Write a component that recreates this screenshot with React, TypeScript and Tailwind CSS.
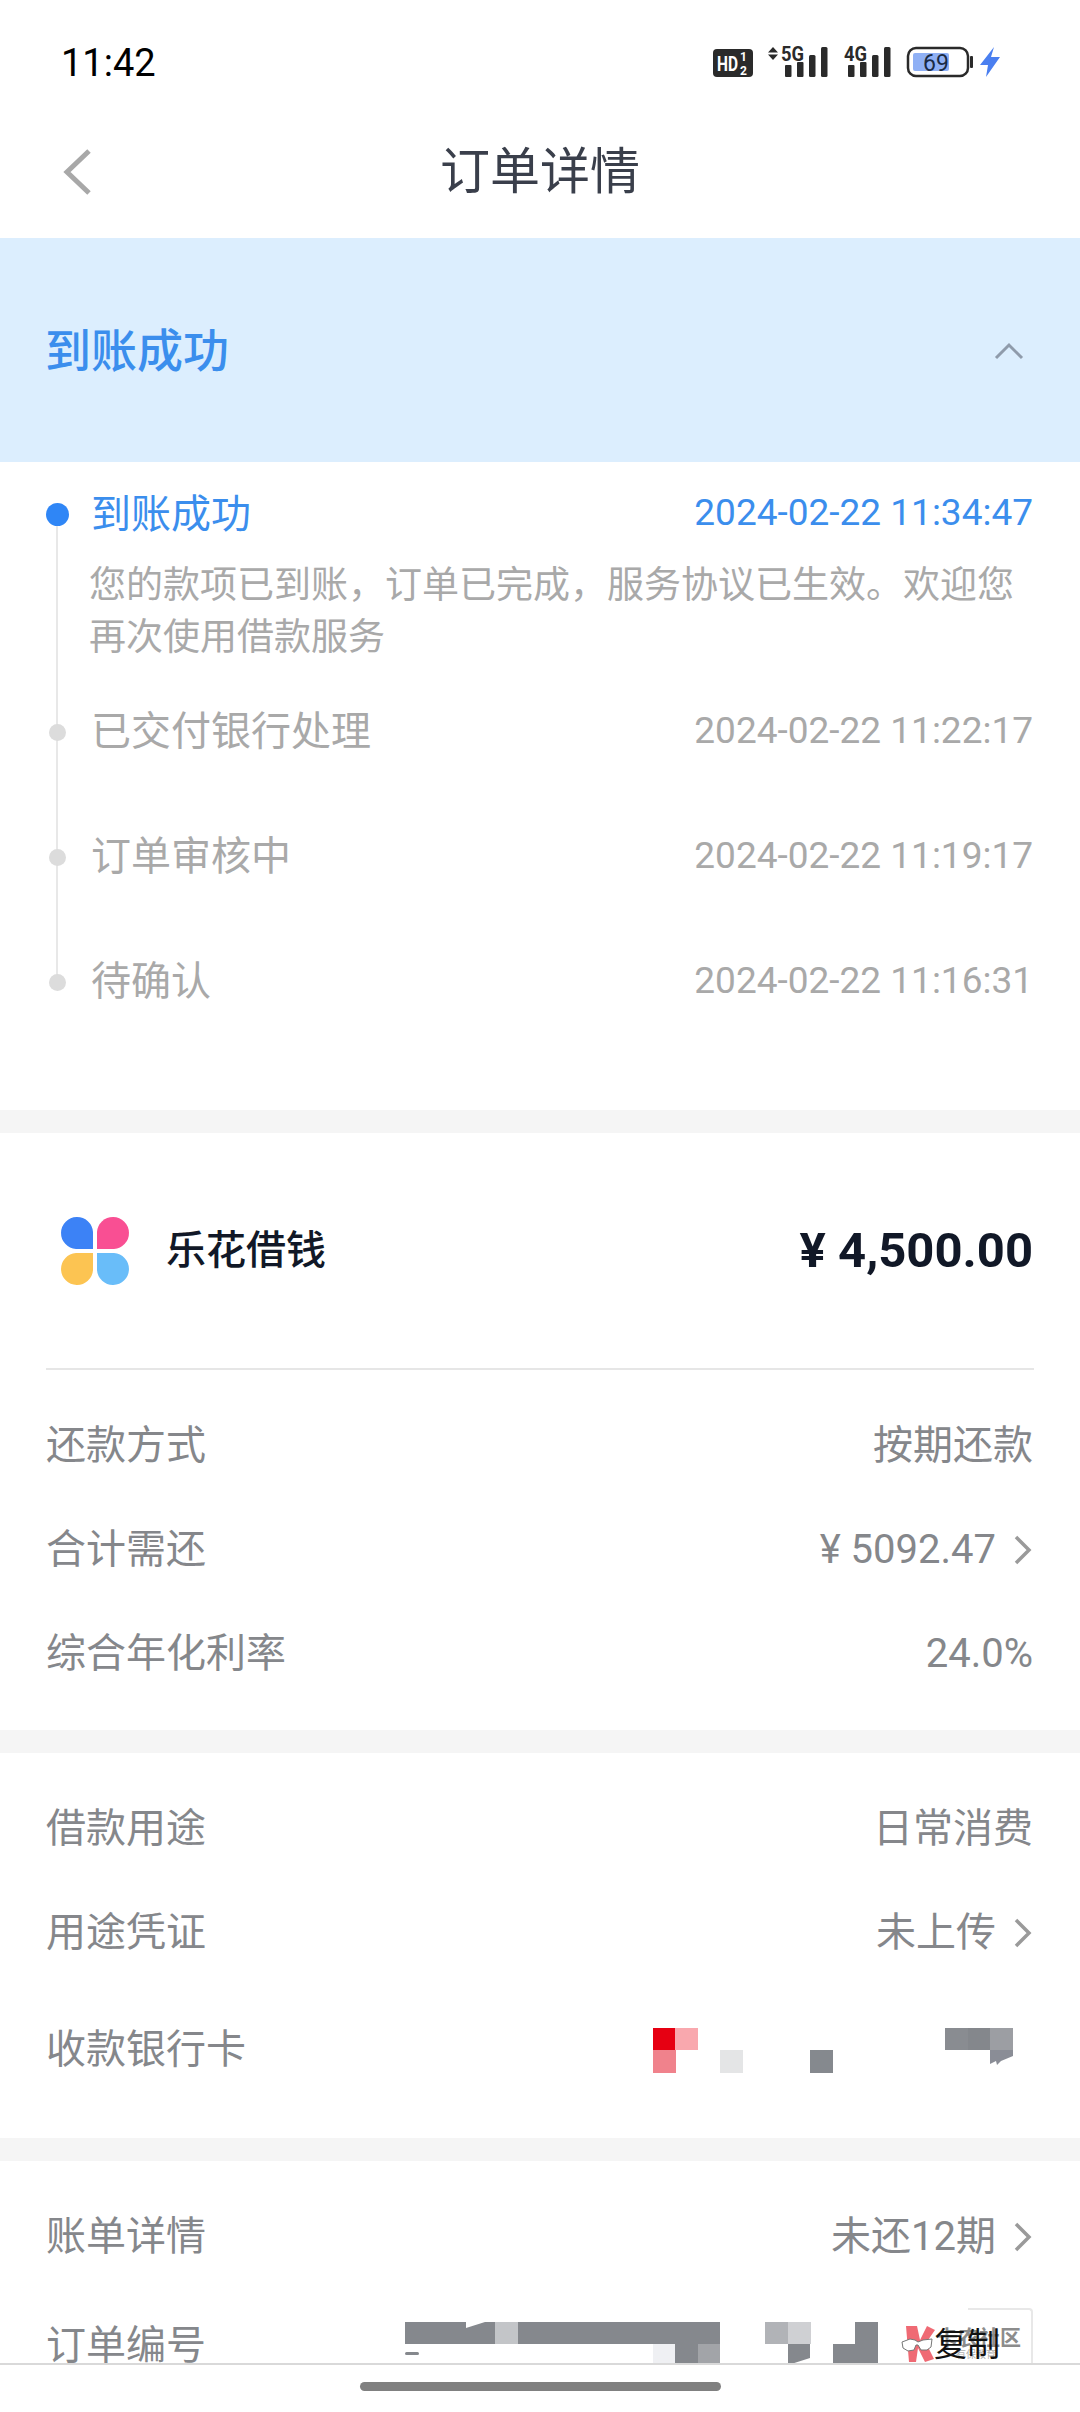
const CN = "font-['Roboto','Noto_Sans_CJK_SC',sans-serif]";

function StatusIcons() {
  const bars = (x: number) => (
    <g fill="#2a2a2a">
      <rect x={x} y="35" width="6.5" height="12" rx="1" />
      <rect x={x + 12} y="32" width="6.5" height="15" rx="1" />
      <rect x={x + 24} y="25" width="6.5" height="22" rx="1.5" />
      <rect x={x + 36} y="17" width="6.5" height="30" rx="1.5" />
    </g>
  );
  return (
    <svg width="340" height="60" viewBox="0 0 340 60" className="block">
      <rect x="33" y="19" width="40" height="28" rx="4" fill="#2a2a2a" />
      <text x="37" y="41" fontFamily="Roboto" fontWeight="700" fontSize="21" fill="#fff" textLength="21" lengthAdjust="spacingAndGlyphs">HD</text>
      <text x="60" y="31" fontFamily="Roboto" fontWeight="700" fontSize="12" fill="#fff">1</text>
      <text x="60" y="45" fontFamily="Roboto" fontWeight="700" fontSize="12" fill="#fff">2</text>
      <path d="M93 17l5 5.5H88zM93 30l5-5.5H88z" fill="#2a2a2a" />
      <text x="101" y="31" fontFamily="Roboto" fontWeight="700" fontSize="20" fill="#2a2a2a" textLength="23" lengthAdjust="spacingAndGlyphs">5G</text>
      {bars(105)}
      <text x="164" y="31" fontFamily="Roboto" fontWeight="700" fontSize="20" fill="#2a2a2a" textLength="23" lengthAdjust="spacingAndGlyphs">4G</text>
      {bars(168)}
      <rect x="228" y="18" width="60" height="28" rx="8" fill="#fff" stroke="#2a2a2a" strokeWidth="2.5" />
      <rect x="233" y="23" width="36" height="18" rx="2" fill="#8fb0f5" />
      <text x="256" y="41" textAnchor="middle" fontFamily="Roboto" fontSize="23" fill="#1a2a44">69</text>
      <rect x="290" y="26" width="3" height="12" rx="1" fill="#2a2a2a" />
      <path d="M314 17l-14 18h8l-2 12 14-20h-9z" fill="#4a7ff0" />
    </svg>
  );
}

function Dot({ active }: { active?: boolean }) {
  return active ? (
    <span className="w-[23px] h-[23px] rounded-full bg-[#2f86f6] shrink-0" />
  ) : (
    <span className="w-[17px] h-[17px] ml-[3px] mr-[3px] rounded-full bg-[#dcdcdc] shrink-0" />
  );
}

function Step({ title, time, active }: { title: string; time: string; active?: boolean }) {
  return (
    <div className="flex items-center h-[52px] pl-[46px] pr-[47px] relative">
      <Dot active={active} />
      <span className={`ml-[22px] text-[40px] leading-[52px] ${active ? "text-[#3b8eed] pt-[1px]" : "text-[#a9a9a9]"}`}>{title}</span>
      <span className={`ml-auto text-[37px] leading-[52px] -mt-[3px] ${active ? "text-[#3b8eed]" : "text-[#a9a9a9]"}`}>{time}</span>
    </div>
  );
}

function Chevron() {
  return (
    <svg width="20" height="32" viewBox="0 0 20 32" fill="none" className="ml-[17px] shrink-0">
      <path d="M3 3l13 13L3 29" stroke="#9a9a9a" strokeWidth="3.5" />
    </svg>
  );
}

function Row({ label, value, arrow, h = "h-[104px]", children }: { label: string; value?: string; arrow?: boolean; h?: string; children?: React.ReactNode }) {
  return (
    <div className={`flex items-center justify-between pl-[46px] pr-[47px] pt-[2px] ${h}`}>
      <span className="text-[40px] text-[#85878b]">{label}</span>
      {children}
      {value && (
        <span className="flex items-center text-[40px] text-[#85878b]">
          {value}
          {arrow && <Chevron />}
        </span>
      )}
    </div>
  );
}

function Band() {
  return <div className="h-[23px] bg-[#f5f5f5]" />;
}

function Logo() {
  return (
    <svg width="70" height="70" viewBox="0 0 70 70" className="shrink-0">
      <path d="M33 33H16A16 16 0 1 1 33 16z" fill="#3c82f6" />
      <path d="M37 33h17A16 16 0 1 0 37 16z" fill="#f94f93" />
      <path d="M33 37H16A16 16 0 1 0 33 54z" fill="#fcc452" />
      <path d="M37 37h17A16 16 0 1 1 37 54z" fill="#69bdf9" />
    </svg>
  );
}

const Px = ({ c, x, y, w = 23, h = 22 }: { c: string; x: number; y: number; w?: number; h?: number }) => (
  <rect x={x} y={y} width={w} height={h} fill={c} />
);

function BankMosaic() {
  return (
    <svg width="360" height="45" viewBox="653 2029 360 45" className="shrink-0 mr-[20px]">
      <Px c="#e60012" x={653} y={2029} />
      <Px c="#f9a8ae" x={675} y={2029} />
      <Px c="#f0828c" x={653} y={2051} h={23} />
      <Px c="#e4e5e6" x={720} y={2051} h={23} />
      <Px c="#85898e" x={810} y={2051} h={23} />
      <Px c="#898c91" x={945} y={2029} />
      <Px c="#84878c" x={968} y={2029} />
      <Px c="#9c9ea3" x={990} y={2029} />
      <path d="M990 2051h23v6l-12 5-4 4-1-4-6 3z" fill="#8a8d96" />
    </svg>
  );
}

function OrderMosaic() {
  return (
    <svg width="520" height="46" viewBox="405 2322 520 46" className="block">
      <path d="M405 2322h91v22h-91z" fill="#85888d" />
      <path d="M466 2322h19l-19 6z" fill="#fff" />
      <Px c="#c3c5c8" x={495} y={2322} />
      <Px c="#85888d" x={518} y={2322} w={202} />
      <Px c="#eff0f3" x={653} y={2344} />
      <Px c="#85888d" x={675} y={2344} />
      <Px c="#a2a4a8" x={698} y={2344} w={22} />
      <rect x={405} y={2352} width="14" height="3" rx="1.5" fill="#85888d" />
      <Px c="#b1b3b7" x={765} y={2322} />
      <Px c="#cfd0d3" x={788} y={2322} />
      <Px c="#85888d" x={855} y={2322} />
      <path d="M788 2344h22v14l-22 7z" fill="#85888d" />
      <path d="M833 2344h45v22h-45z" fill="#85888d" />
    </svg>
  );
}

export default function App() {
  return (
    <div className={`relative w-[1080px] h-[2412px] overflow-hidden bg-white ${CN}`}>
      <div className="flex justify-between items-start h-[118px] pt-[30px] pl-[61px] pr-[60px]">
        <span className="text-[38px] leading-[66px] text-black font-['Roboto']">11:42</span>
        <StatusIcons />
      </div>
      <div className="relative flex items-center justify-center h-[120px] pb-[12px]">
        <svg width="30" height="48" viewBox="0 0 30 48" fill="none" className="absolute left-[62px] top-[30px]">
          <path d="M27 3L5 24l22 21" stroke="#a8a8a8" strokeWidth="5" />
        </svg>
        <span className="text-[50px] text-[#3a3f4b] whitespace-nowrap">订单详情</span>
      </div>
      <div className="flex items-center justify-between h-[224px] pl-[45px] pr-[56px] pt-[2px] bg-[#dceefe]">
        <span className="text-[46px] font-medium text-[#3b8eed]">到账成功</span>
        <svg width="30" height="18" viewBox="0 0 30 18" fill="none">
          <path d="M2 16L15 3l13 13" stroke="#8f9bab" strokeWidth="3" />
        </svg>
      </div>
      <div className="relative h-[648px] pt-[26px]">
        <div className="absolute left-[56px] top-[54px] h-[466px] w-[2px] bg-[#e8e8e8]" />
        <Step active title="到账成功" time="2024-02-22 11:34:47" />
        <p className="pl-[89px] pr-[48px] mt-[20px] mb-[42px] text-[37px] leading-[52px] text-[#a9a9a9]">
          您的款项已到账，订单已完成，服务协议已生效。欢迎您
          <br />
          再次使用借款服务
        </p>
        <div className="flex flex-col gap-[73px]">
          <Step title="已交付银行处理" time="2024-02-22 11:22:17" />
          <Step title="订单审核中" time="2024-02-22 11:19:17" />
          <Step title="待确认" time="2024-02-22 11:16:31" />
        </div>
      </div>
      <Band />
      <div className="h-[597px]">
        <div className="flex items-center mx-[46px] h-[237px] border-b-2 border-[#e6e6e6]">
          <div className="ml-[14px]"><Logo /></div>
          <span className="ml-[36px] text-[40px] font-medium text-[#111827]">乐花借钱</span>
          <span className="ml-auto mr-[1px] text-[49px] font-bold text-[#111827] font-['Roboto','Noto_Sans_CJK_SC']">¥ 4,500.00</span>
        </div>
        <div className="pt-[23px]">
          <Row label="还款方式" value="按期还款" />
          <Row label="合计需还" value="¥ 5092.47" arrow />
          <Row label="综合年化利率" value="24.0%" />
        </div>
      </div>
      <Band />
      <div className="h-[385px] pt-[23px]">
        <Row label="借款用途" value="日常消费" />
        <Row label="用途凭证" value="未上传" arrow />
        <Row label="收款银行卡" h="h-[130px]">
          <BankMosaic />
        </Row>
      </div>
      <Band />
      <div className="pt-[23px]">
        <Row label="账单详情" value="未还12期" arrow />
        <div className="flex items-start justify-between h-[112px] px-[46px]">
          <span className="text-[40px] leading-[60px] mt-[28px] text-[#85878b]">订单编号</span>
        </div>
      </div>

      <div className="absolute left-[405px] top-[2322px]"><OrderMosaic /></div>
      <div className="absolute left-[905px] top-[2308px] w-[128px] h-[56px] rounded-t-[4px] border-t-2 border-r-2 border-[#e8e8e8]" />
      <div className="absolute left-[899px] top-[2300px] w-[69px] h-[30px] bg-white" />
      <div className="absolute left-[900px] top-[2326px] w-[120px] h-[36px]">
        <svg width="36" height="36" viewBox="0 0 36 36" className="absolute left-0 top-0">
          <path d="M6 0h11l3 14L27 0l8 4-9 13 8 16-9 3-7-14-2 14H9z" fill="#ef6a74" />
          <path d="M2 16l8-3 5 1 3 2 5-2 9-1-1 8-4 3-6 0-3-5-2 0-2 5-6 1-5-3z" fill="#fff" stroke="#777" strokeWidth="1" />
        </svg>
        <span className="absolute left-[37px] top-0 text-[21px] leading-[24px] font-bold text-[#8c8c8c] whitespace-nowrap">卡农社区</span>
        <span className="absolute left-[56px] top-[22px] text-[10px] leading-[14px] text-[#b0b0b0] whitespace-nowrap">有保教育</span>
      </div>
      <span className="absolute left-[934px] top-[2324px] text-[33px] leading-[42px] text-[#111]">复制</span>

      <div className="absolute left-0 right-0 top-[2363px] bottom-0 bg-white border-t-2 border-[#d9d9d9] pt-[17px]">
        <div className="ml-[360px] w-[361px] h-[9px] rounded-full bg-[#808080]" />
      </div>
    </div>
  );
}
